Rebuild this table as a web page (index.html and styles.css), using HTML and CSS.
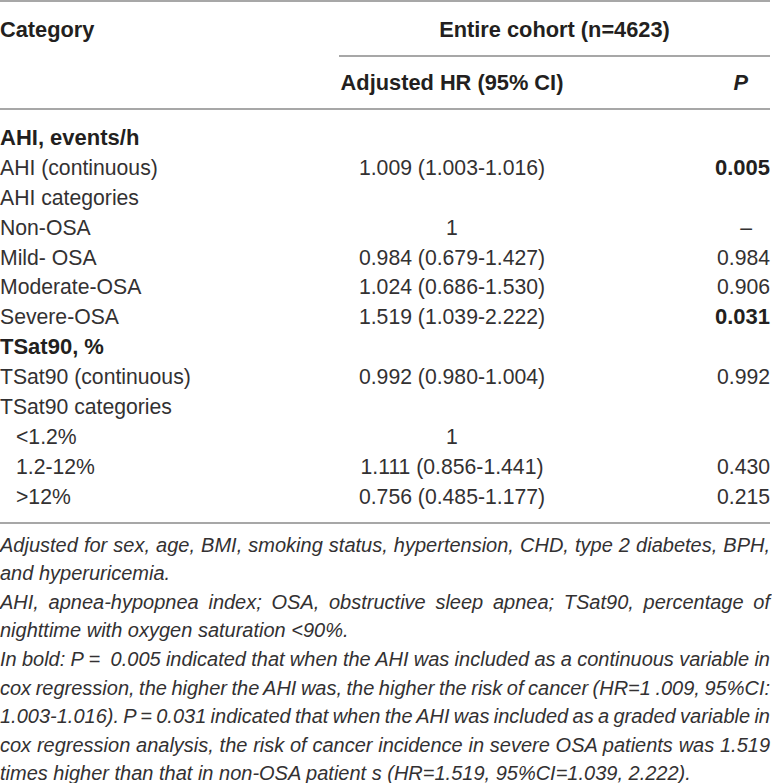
FILE: index.html
```html
<!DOCTYPE html>
<html lang="en">
<head>
<meta charset="utf-8">
<title>Adjusted HR table</title>
<link rel="stylesheet" href="styles.css">
</head>
<body>
<div class="page">
  <div class="thead">
    <div class="h-cat">Category</div>
    <div class="h-group">Entire cohort (n=4623)</div>
    <div class="h-hr">Adjusted HR (95% CI)</div>
    <div class="h-p"><i>P</i></div>
  </div>
  <div class="tbody">
    <div class="row"><div class="c1 sec">AHI, events/h</div><div class="c2"></div><div class="c3"></div></div>
    <div class="row"><div class="c1">AHI (continuous)</div><div class="c2">1.009 (1.003-1.016)</div><div class="c3"><b>0.005</b></div></div>
    <div class="row"><div class="c1">AHI categories</div><div class="c2"></div><div class="c3"></div></div>
    <div class="row"><div class="c1">Non-OSA</div><div class="c2">1</div><div class="c3"><span class="dash">–</span></div></div>
    <div class="row"><div class="c1">Mild- OSA</div><div class="c2">0.984 (0.679-1.427)</div><div class="c3">0.984</div></div>
    <div class="row"><div class="c1">Moderate-OSA</div><div class="c2">1.024 (0.686-1.530)</div><div class="c3">0.906</div></div>
    <div class="row"><div class="c1">Severe-OSA</div><div class="c2">1.519 (1.039-2.222)</div><div class="c3"><b>0.031</b></div></div>
    <div class="row"><div class="c1 sec">TSat90, %</div><div class="c2"></div><div class="c3"></div></div>
    <div class="row"><div class="c1">TSat90 (continuous)</div><div class="c2">0.992 (0.980-1.004)</div><div class="c3">0.992</div></div>
    <div class="row"><div class="c1">TSat90 categories</div><div class="c2"></div><div class="c3"></div></div>
    <div class="row"><div class="c1 ind">&lt;1.2%</div><div class="c2">1</div><div class="c3"></div></div>
    <div class="row"><div class="c1 ind">1.2-12%</div><div class="c2">1.111 (0.856-1.441)</div><div class="c3">0.430</div></div>
    <div class="row"><div class="c1 ind">&gt;12%</div><div class="c2">0.756 (0.485-1.177)</div><div class="c3">0.215</div></div>
  </div>
  <div class="notes">
    <span class="ln full">Adjusted for sex, age, BMI, smoking status, hypertension, CHD, type 2 diabetes, BPH,</span>
    <span class="ln">and hyperuricemia.</span>
    <span class="ln full">AHI, apnea-hypopnea index; OSA, obstructive sleep apnea; TSat90, percentage of</span>
    <span class="ln">nighttime with oxygen saturation &lt;90%.</span>
    <span class="ln full">In bold: P =&nbsp; 0.005 indicated that when the AHI was included as a continuous variable in</span>
    <span class="ln full">cox regression, the higher the AHI was, the higher the risk of cancer (HR=1 .009, 95%CI:</span>
    <span class="ln full">1.003-1.016). P = 0.031 indicated that when the AHI was included as a graded variable in</span>
    <span class="ln full">cox regression analysis, the risk of cancer incidence in severe OSA patients was 1.519</span>
    <span class="ln">times higher than that in non-OSA patient s (HR=1.519, 95%CI=1.039, 2.222).</span>
  </div>
</div>
</body>
</html>
```
FILE: styles.css
```css
html, body {
  margin: 0;
  padding: 0;
  background: #ffffff;
}

body {
  color: #333132;
  font-family: "Liberation Sans", Arial, sans-serif;
}

.page {
  width: 770px;
}

.thead {
  display: grid;
  grid-template-columns: 339px 226px 1fr;
  border-top: 2px solid #a7a7a7;
  border-bottom: 2px solid #a7a7a7;
  color: #231f20;
  font-weight: bold;
  font-size: 21.8px;
}

.h-cat {
  grid-row: 1 / 3;
  padding-top: 3px;
  line-height: 50px;
}

.h-group {
  grid-column: 2 / 4;
  padding-top: 3px;
  line-height: 50px;
  text-align: center;
  border-bottom: 2px solid #a7a7a7;
}

.h-hr {
  line-height: 51px;
  text-align: center;
}

.h-p {
  line-height: 51px;
  text-align: right;
  padding-right: 22px;
}

.tbody {
  padding: 13px 0 10px;
  border-bottom: 2px solid #a7a7a7;
  font-size: 21.2px;
}

.row {
  display: grid;
  grid-template-columns: 339px 226px 1fr;
  height: 29.9px;
  line-height: 29.9px;
}

.c1 {
  text-align: left;
  white-space: nowrap;
}

.c2 {
  text-align: center;
  white-space: nowrap;
}

.c3 {
  text-align: right;
  white-space: nowrap;
}

.c3 b {
  color: #231f20;
  font-size: 22px;
}

.sec {
  color: #231f20;
  font-weight: bold;
  font-size: 22px;
}

.ind {
  padding-left: 16px;
}

.dash {
  padding-right: 18px;
}

.notes {
  padding-top: 7px;
  font-style: italic;
  font-size: 20px;
  line-height: 28.6px;
}

.ln {
  display: block;
  text-align: left;
}

.ln.full {
  word-spacing: -2px;
  text-align: justify;
  text-align-last: justify;
}
```
